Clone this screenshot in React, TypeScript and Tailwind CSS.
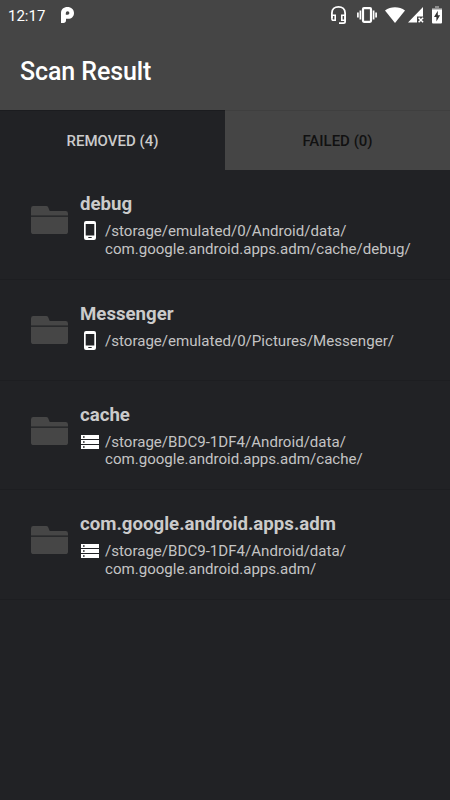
import React from 'react';

type Storage = 'phone' | 'card';

interface RemovedItem {
    name: string;
    storage: Storage;
    path: string[];
    height: string;
}

const REMOVED_ITEMS: RemovedItem[] = [
    { name: 'debug', storage: 'phone', path: ['/storage/emulated/0/Android/data/', 'com.google.android.apps.adm/cache/debug/'], height: 'h-[110px]' },
    { name: 'Messenger', storage: 'phone', path: ['/storage/emulated/0/Pictures/Messenger/'], height: 'h-[100.6px]' },
    { name: 'cache', storage: 'card', path: ['/storage/BDC9-1DF4/Android/data/', 'com.google.android.apps.adm/cache/'], height: 'h-[109.8px]' },
    { name: 'com.google.android.apps.adm', storage: 'card', path: ['/storage/BDC9-1DF4/Android/data/', 'com.google.android.apps.adm/'], height: 'h-[109.6px]' },
];

const FolderIcon: React.FC = () => (
    <svg width="37" height="28" viewBox="0 0 37 28" fill="#464646">
        <path d="M0 9.6V2.4Q0 0 2.4 0H15.2Q16.6 0 17.2 1.3L18.7 5H34.6Q37 5 37 7.4V9.6Z" />
        <path d="M0 10.8H37V25.4Q37 28 34.4 28H2.6Q0 28 0 25.4Z" />
    </svg>
);

const PhoneIcon: React.FC = () => (
    <svg width="12" height="19" viewBox="0 0 12 19">
        <path fill="#fff" fillRule="evenodd" d="M2 0H10Q12 0 12 2V17Q12 19 10 19H2Q0 19 0 17V2Q0 0 2 0ZM1.7 3V14.5H10.3V3ZM4.3 16V17H7.7V16Z" />
    </svg>
);

const CardIcon: React.FC = () => (
    <svg width="18" height="14" viewBox="0 0 18 14">
        <path fill="#fff" fillRule="evenodd" d="M0 0H18V4H0ZM0 5H18V9H0ZM0 10H18V14H0ZM2 1.2V2.8H3.6V1.2ZM2 6.2V7.8H3.6V6.2ZM2 11.2V12.8H3.6V11.2Z" />
    </svg>
);

const StatusBar: React.FC = () => (
    <div className="h-[30px] px-2 flex items-center">
        <span className="text-[15px] leading-[30px] w-[53px] pt-px">12:17</span>
        <svg width="13" height="16" viewBox="0 0 13 16">
            <path fill="#fff" fillRule="evenodd" d="M0 6.2C0 2.2 2.8 0 6.4 0C10.2 0 13 2.5 13 6C13 9.5 10.6 11.8 7.2 11.8H5V13.2C5 15 4 16 2.4 16H0ZM4.8 7.8H6.7Q8.4 7.8 8.4 6Q8.4 4.3 6.6 4.3Q4.8 4.3 4.8 6Z" />
        </svg>
        <div className="ml-auto flex items-center">
            {/* headset */}
            <svg width="15" height="18" viewBox="0 0 15 18" fill="none" stroke="#fff">
                <path strokeWidth="1.8" d="M.9 12V7C.9 3.2 3.7.9 7.5.9S14.1 3.2 14.1 7V15.5Q14.1 17.1 12.5 17.1H8" />
                <path strokeWidth="1.6" d="M.9 9.2H4.2V14.3H2.5Q.9 14.3 .9 12.5ZM10.8 9.2H14.1V14.3H10.8Z" />
            </svg>
            {/* vibrate */}
            <svg className="ml-[11px]" width="20" height="16" viewBox="0 0 20 16" fill="none" stroke="#fff">
                <rect x="6" y="1.2" width="8" height="13.6" rx="1" strokeWidth="2.2" />
                <path strokeWidth="1.7" d="M.9 5.5V10.5M3.4 3.5V12.5M16.6 3.5V12.5M19.1 5.5V10.5" />
            </svg>
            {/* wifi */}
            <svg className="ml-[8px]" width="20" height="16" viewBox="0 0 20 16">
                <path fill="#fff" d="M0 3.4C5.7-.9 14.3-.9 20 3.4L10 16Z" />
            </svg>
            {/* mobile signal, no data */}
            <svg className="ml-[3px]" width="16" height="16" viewBox="0 0 16 16">
                <path fill="#fff" d="M15 0V9.4H9V15.5H0Z" />
                <path stroke="#fff" strokeWidth="1.5" d="M10.6 10.8L15.1 15.3M15.1 10.8L10.6 15.3" />
            </svg>
            {/* battery */}
            <svg className="ml-[8px]" width="10" height="18" viewBox="0 0 10 18">
                <path fill="#8c8c8c" d="M3 0H7V2H10V4H0V2H3Z" />
                <path fill="#fff" d="M0 3.5H10V16.5Q10 17.5 9 17.5H1Q0 17.5 0 16.5Z" />
                <path fill="#333" d="M5.8 4.8L2 11H4.4V15.5L8.1 9.3H5.8Z" />
            </svg>
        </div>
    </div>
);

const ResultRow: React.FC<{ item: RemovedItem }> = ({ item }) => (
    <li className={`${item.height} border-b border-[#1d1e21] flex pl-[31px]`}>
        <div className="w-[49px] pt-[36px]">
            <FolderIcon />
        </div>
        <div className="pt-[22px]">
            <h2 className="text-[18.65px] leading-[24px] font-bold text-[#cbcbcb] whitespace-nowrap">{item.name}</h2>
            <div className="flex pt-[7px]">
                <div className={item.storage === 'phone' ? 'w-[25px] pl-[4px] -mt-[2px]' : 'w-[25px] pl-[1px] pt-[1px]'}>
                    {item.storage === 'phone' ? <PhoneIcon /> : <CardIcon />}
                </div>
                <p className="text-[15.08px] leading-[17.8px] text-[#c4c4c4] whitespace-nowrap">
                    {item.path.map((line) => (
                        <span key={line} className="block">{line}</span>
                    ))}
                </p>
            </div>
        </div>
    </li>
);

const App: React.FC = () => (
    <div className="w-[450px] h-[800px] bg-[#212225] text-white font-['Roboto',sans-serif] overflow-hidden">
        <header className="h-[110px] bg-[#454545]">
            <StatusBar />
            <h1 className="pl-[20px] pt-[26px] text-[25px] leading-[32px] tracking-[-0.1px] font-medium">Scan Result</h1>
        </header>
        <nav className="h-[60px] flex text-[15px] font-medium">
            <button className="w-[225px] pt-[2px] bg-[#212225] text-[#cbcbcb] border-t border-[#1b1c1f]">REMOVED (4)</button>
            <button className="w-[225px] pt-[2px] bg-[#454545] text-[#111] border-t border-[#3f3f3f]">FAILED (0)</button>
        </nav>
        <ul>
            {REMOVED_ITEMS.map((item) => (
                <ResultRow key={item.name} item={item} />
            ))}
        </ul>
    </div>
);

export default App;
